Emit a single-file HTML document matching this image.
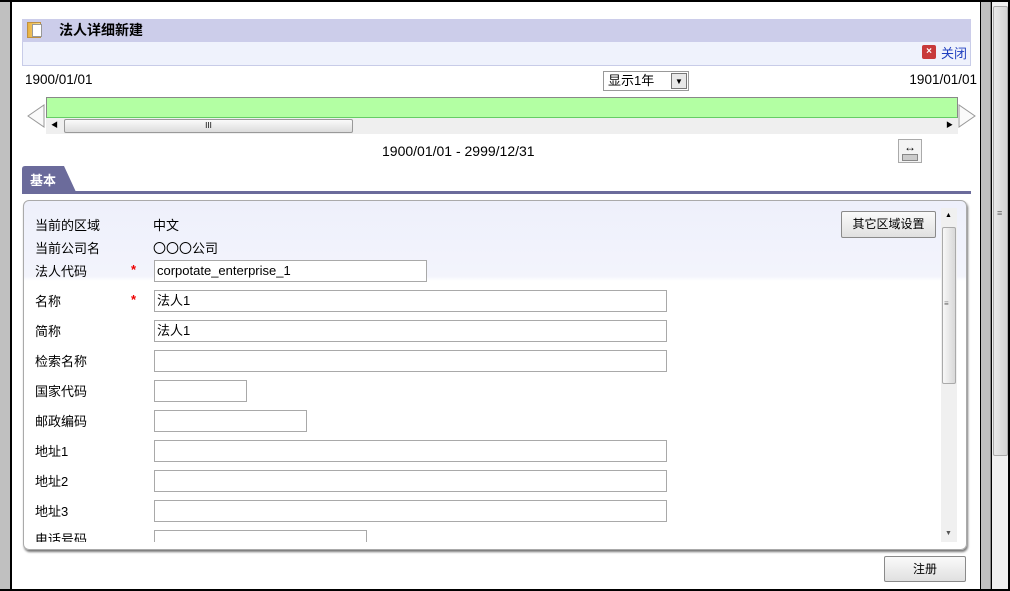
<!DOCTYPE html>
<html><head><meta charset="utf-8"><style>
*{box-sizing:border-box}
body{margin:0;width:1010px;height:591px;overflow:hidden;background:#000;font-family:"Liberation Sans","Noto Sans CJK SC",sans-serif;font-size:13px;color:#000;position:relative}
.a{position:absolute}
.inp{position:absolute;height:22px;border:1px solid #a9a9a9;background:#fff;padding:2px 2px;font-size:13px;line-height:16px}
.lbl{position:absolute;left:35px;font-size:13px}
.req{position:absolute;left:131px;color:#e00;font-size:13px;font-weight:bold}
.btn{position:absolute;border:1px solid #8a8a8a;border-radius:2px;background:linear-gradient(#fafafa,#e0e0e0);text-align:center;font-size:12px}
.d{font-size:13.5px}
</style></head><body>
<div class="a" style="left:0;top:2px;width:10px;height:587px;background:#c0c0c0"></div>
<div class="a" style="left:12px;top:2px;width:968px;height:587px;background:#fff"></div>
<div class="a" style="left:981px;top:2px;width:10px;height:587px;background:#c0c0c0;border-right:1px solid #888"></div>
<div class="a" style="left:992px;top:2px;width:16px;height:587px;background:#f0f0f0"></div>
<div class="a" style="left:993px;top:6px;width:15px;height:450px;background:linear-gradient(90deg,#e8e8e8,#d4d4d4);border:1px solid #aaa;border-radius:2px"></div>
<div class="a" style="left:997px;top:208px;font-size:9px;color:#666">≡</div>

<div class="a" style="left:22px;top:19px;width:949px;height:23px;background:#cccdea"></div>
<div class="a" style="left:22px;top:42px;width:949px;height:24px;background:#eff2fc;border:1px solid #c8cce8;border-top:none"></div>
<div class="a" style="left:27px;top:22px;width:14px;height:16px;background:linear-gradient(90deg,#e8b040,#f8e090);border:1px solid #c09040"></div>
<div class="a" style="left:32px;top:24px;width:10px;height:13px;background:#fff;border:1px solid #999"></div>
<div class="a" style="left:59px;top:20px;font-size:14px;font-weight:bold">法人详细新建</div>
<div class="a" style="left:922px;top:45px;width:14px;height:14px;background:#c83a3a;border-radius:2px;color:#fff;font-size:10px;line-height:14px;text-align:center;font-weight:bold">×</div>
<div class="a" style="left:941px;top:43px;color:#1f3fbf">关闭</div>

<div class="a d" style="left:25px;top:72px">1900/01/01</div>
<div class="a d" style="right:33px;top:72px">1901/01/01</div>
<div class="a" style="left:603px;top:71px;width:86px;height:20px;border:1px solid #999;background:#fff;padding-left:4px;line-height:18px">显示1年</div>
<div class="a" style="left:671px;top:73px;width:16px;height:16px;border:1px solid #777;background:#e8e8e8;font-size:8px;text-align:center;line-height:15px">▼</div>

<div class="a" style="left:46px;top:97px;width:912px;height:21px;background:#b3ffa3;border:1px solid #888;border-bottom-color:#6c6"></div>
<div class="a" style="left:46px;top:118px;width:912px;height:16px;background:#efefef"></div>
<div class="a" style="left:64px;top:119px;width:289px;height:14px;background:linear-gradient(#fafafa,#dcdcdc);border:1px solid #999;border-radius:2px;text-align:center;font-size:8px;line-height:12px">III</div>
<div class="a" style="left:51px;top:120px;font-size:7px">◀</div>
<div class="a" style="left:946px;top:120px;font-size:7px">▶</div>
<svg class="a" style="left:26px;top:104px" width="20" height="24"><path d="M18 1 L18 23 L2 12 Z" fill="#fafafa" stroke="#999"/></svg>
<svg class="a" style="left:958px;top:104px" width="20" height="24"><path d="M1 1 L1 23 L17 12 Z" fill="#fafafa" stroke="#999"/></svg>
<div class="a" style="left:382px;top:143px;font-size:14px">1900/01/01 - 2999/12/31</div>
<div class="a" style="left:898px;top:139px;width:24px;height:24px;border:1px solid #aaa;background:#f4f4f4;text-align:center;font-size:12px;line-height:14px">↔<div style="margin:0 3px;height:7px;background:#ccc;border:1px solid #888"></div></div>

<svg class="a" style="left:22px;top:166px" width="56" height="26"><path d="M0 26 L0 3 Q0 0 3 0 L42 0 L54 26 Z" fill="#6b6b9b"/></svg>
<div class="a" style="left:30px;top:170px;color:#fff;font-weight:bold;font-size:13px">基本</div>
<div class="a" style="left:22px;top:191px;width:949px;height:3px;background:#6b6b9b"></div>

<div class="a" style="left:23px;top:200px;width:944px;height:350px;border:1px solid #aaa;border-radius:6px;background:linear-gradient(#eef0fb,#f3f4fc 75px,#fff 80px);box-shadow:1px 2px 2px #777"></div>
<div class="a" style="left:941px;top:208px;width:16px;height:334px;background:#f0f0f0"></div>
<div class="a" style="left:942px;top:227px;width:14px;height:157px;background:linear-gradient(90deg,#f8f8f8,#d8d8d8);border:1px solid #aaa;border-radius:2px"></div>
<div class="a" style="left:945px;top:212px;font-size:7px">▲</div>
<div class="a" style="left:945px;top:530px;font-size:7px;color:#555">▼</div>
<div class="a" style="left:944px;top:299px;font-size:8px;color:#666">≡</div>
<div class="btn" style="left:841px;top:211px;width:95px;height:27px;line-height:25px">其它区域设置</div>

<div class="lbl" style="top:215px">当前的区域</div><div class="a" style="left:153px;top:215px">中文</div>
<div class="lbl" style="top:238px">当前公司名</div><div class="a" style="left:153px;top:238px">〇〇〇公司</div>
<div class="lbl" style="top:261px">法人代码</div><div class="req" style="top:262px">*</div>
<div class="inp" style="left:154px;top:260px;width:273px">corpotate_enterprise_1</div>
<div class="lbl" style="top:291px">名称</div><div class="req" style="top:292px">*</div>
<div class="inp" style="left:154px;top:290px;width:513px">法人1</div>
<div class="lbl" style="top:321px">简称</div>
<div class="inp" style="left:154px;top:320px;width:513px">法人1</div>
<div class="lbl" style="top:351px">检索名称</div>
<div class="inp" style="left:154px;top:350px;width:513px"></div>
<div class="lbl" style="top:381px">国家代码</div>
<div class="inp" style="left:154px;top:380px;width:93px"></div>
<div class="lbl" style="top:411px">邮政编码</div>
<div class="inp" style="left:154px;top:410px;width:153px"></div>
<div class="lbl" style="top:441px">地址1</div>
<div class="inp" style="left:154px;top:440px;width:513px"></div>
<div class="lbl" style="top:471px">地址2</div>
<div class="inp" style="left:154px;top:470px;width:513px"></div>
<div class="lbl" style="top:501px">地址3</div>
<div class="inp" style="left:154px;top:500px;width:513px"></div>
<div class="a" style="left:30px;top:528px;width:640px;height:14px;overflow:hidden">
<div class="lbl" style="left:5px;top:1px">电话号码</div>
<div class="inp" style="left:124px;top:2px;width:213px"></div></div>

<div class="btn" style="left:884px;top:556px;width:82px;height:26px;line-height:24px">注册</div>
</body></html>
